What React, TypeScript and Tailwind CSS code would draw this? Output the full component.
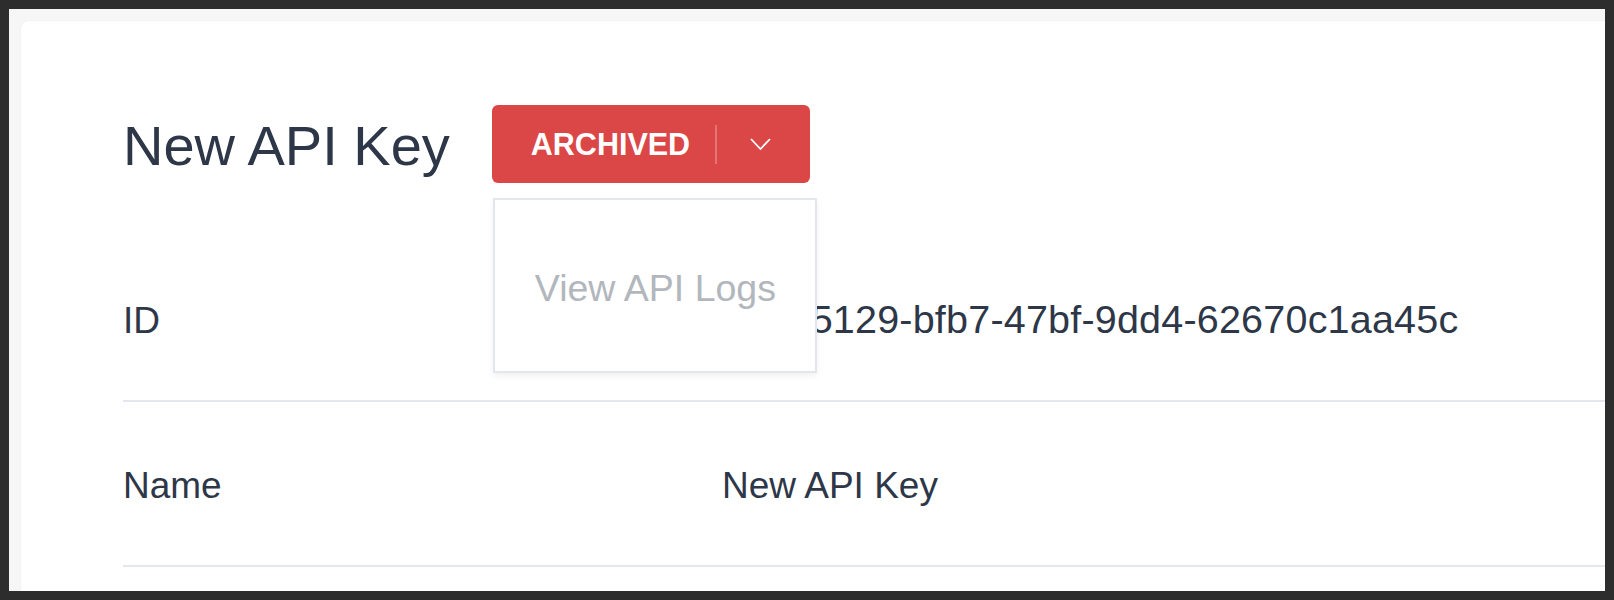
import { useState } from 'react';

// Detail rows for the key
interface DetailRow {
    label: string;
    value: string;
    mono?: boolean;
}

const rows: DetailRow[] = [
    { label: 'ID', value: '9e3d5129-bfb7-47bf-9dd4-62670c1aa45c', mono: true },
    { label: 'Name', value: 'New API Key' },
];

function Chevron() {
    return (
        <svg width="21" height="12" viewBox="0 0 21 12" fill="none">
            <path d="M1 1l9.5 10L20 1" stroke="white" strokeWidth="1.8" />
        </svg>
    );
}

export default function App() {
    const [open] = useState(true);

    return (
        <div className="h-screen w-full overflow-hidden bg-[#2d2d2d] p-[9px] font-['Liberation_Sans',Arial,sans-serif]">
            <div className="h-full w-full overflow-hidden bg-[#f6f6f6] pl-[12px] pt-[12px]">
                <div className="h-full w-[1700px] rounded-tl-lg bg-white pl-[102px] pt-[84px] text-[#2d3748] shadow-[0_0_2px_rgba(0,0,0,0.06)]">
                    {/* Header */}
                    <div className="flex items-center">
                        <h1 className="pt-[3px] text-[56px] leading-[64px] font-normal">New API Key</h1>
                        <div className="relative ml-[42px]">
                            <button className="flex h-[78px] w-[318px] items-center rounded-[6px] bg-[#db4646] pl-[39px]">
                                <span className="text-[30.5px] font-bold leading-none text-white">ARCHIVED</span>
                                <span className="ml-[25px] h-[39px] w-[2px] bg-white/25" />
                                <span className="ml-[33px] flex">
                                    <Chevron />
                                </span>
                            </button>
                            {open && (
                                <div className="absolute left-[1px] top-[93px] z-10 flex h-[175px] w-[324px] items-center border-2 border-[#e3e7ec] bg-white pl-[40px] pt-[6px] shadow-[0_3px_6px_rgba(0,0,0,0.06)]">
                                    <span className="text-[37.5px] leading-none text-[#b2b6bd]">View API Logs</span>
                                </div>
                            )}
                        </div>
                    </div>

                    {/* Rows */}
                    <div className="mt-[53px]">
                        {rows.map((row) => (
                            <div key={row.label} className="flex items-baseline border-b-2 border-[#e4e8ee] pt-[56px] pb-[51px] text-[37px] leading-[56px]">
                                <div className="w-[599px] shrink-0">{row.label}</div>
                                <div className={row.mono ? 'whitespace-nowrap text-[39.5px] leading-[54px] tracking-[0.2px]' : 'whitespace-nowrap'}>{row.value}</div>
                            </div>
                        ))}
                    </div>
                </div>
            </div>
        </div>
    );
}
